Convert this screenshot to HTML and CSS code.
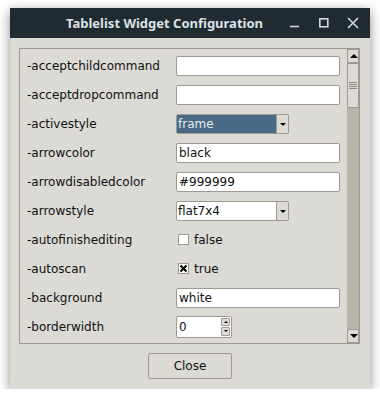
FILE: index.html
```html
<!DOCTYPE html>
<html lang="en">
<head>
	<meta charset="UTF-8">
	<title>Tablelist Widget Configuration</title>
	<link rel="stylesheet" href="styles.css">
</head>
<body>
	<div class="window">
		<div class="titlebar">
			<span class="title">Tablelist Widget Configuration</span>
			<div class="wm-btns">
				<svg width="12" height="12" viewBox="0 0 12 12"><path d="M1 9.5h9" stroke="#d3d7d9" stroke-width="1.6"/></svg>
				<svg width="12" height="12" viewBox="0 0 12 12"><rect x="1.8" y="1.8" width="8" height="8" fill="none" stroke="#d3d7d9" stroke-width="1.6"/></svg>
				<svg width="12" height="12" viewBox="0 0 12 12"><path d="M1 1l10 10M11 1L1 11" stroke="#d3d7d9" stroke-width="1.6"/></svg>
			</div>
		</div>
		<div class="body">
			<div class="frame">
				<div class="list">
					<div class="row"><span class="lbl">-acceptchildcommand</span><span class="entry"></span></div>
					<div class="row"><span class="lbl">-acceptdropcommand</span><span class="entry"></span></div>
					<div class="row"><span class="lbl">-activestyle</span><span class="combo"><span class="combo-txt sel">frame</span><span class="combo-btn"></span></span></div>
					<div class="row"><span class="lbl">-arrowcolor</span><span class="entry">black</span></div>
					<div class="row"><span class="lbl">-arrowdisabledcolor</span><span class="entry">#999999</span></div>
					<div class="row"><span class="lbl">-arrowstyle</span><span class="combo"><span class="combo-txt">flat7x4</span><span class="combo-btn"></span></span></div>
					<div class="row"><span class="lbl">-autofinishediting</span><span class="check"><span class="box"></span>false</span></div>
					<div class="row"><span class="lbl">-autoscan</span><span class="check"><span class="box on"><svg width="9" height="9" viewBox="0 0 9 9"><path d="M1.5 1.5l6 6M7.5 1.5l-6 6" stroke="#000" stroke-width="2"/></svg></span>true</span></div>
					<div class="row"><span class="lbl">-background</span><span class="entry">white</span></div>
					<div class="row"><span class="lbl">-borderwidth</span><span class="spin"><span class="spin-txt">0</span><span class="spin-btns"><span class="sb up"></span><span class="sb down"></span></span></span></div>
				</div>
				<div class="scrollbar">
					<span class="arrow a-up"></span>
					<span class="thumb"><span class="grip"></span></span>
					<span class="trough"></span>
					<span class="arrow a-down"></span>
				</div>
			</div>
			<div class="footer">
				<span class="button">Close</span>
			</div>
		</div>
	</div>
</body>
</html>
```

FILE: styles.css
```css
body{margin:0;background-color:#fff;font-family:"DejaVu Sans",sans-serif;font-size:12px;color:#111;}
.window{width:360px;height:381px;margin:8px 0 0 10px;background-color:#dcdad5;box-shadow:0 3px 11px rgba(0,0,0,.45);display:flex;flex-direction:column;}
.titlebar{height:30px;background-color:#1f2b31;display:flex;align-items:center;flex-shrink:0;}
.title{font-family:"Noto Sans",sans-serif;font-weight:bold;font-size:13px;color:#dde2e6;padding-left:56px;flex:1;}
.wm-btns{display:flex;gap:17px;padding-right:11px;align-items:center;}
.wm-btns svg{display:block;}
.body{flex:1;display:flex;flex-direction:column;padding:10px 10px 0 9px;}
.frame{height:294px;border:1px solid #9e9a91;display:flex;}
.list{flex:1;padding:2px 0 0 7px;overflow:hidden;}
.row{height:29px;display:flex;align-items:center;}
.lbl{width:149px;flex-shrink:0;}
.entry{width:162px;height:18px;background-color:#fff;border:1px solid #9e9a91;border-radius:2px;line-height:18px;text-indent:2px;}
.combo{width:111px;height:18px;border:1px solid #9e9a91;border-radius:2px;background-color:#fff;display:flex;}
.combo-txt{flex:1;line-height:18px;padding-left:1px;}
.combo-txt.sel{background-color:#4a6984;color:#e6ebf0;}
.combo-btn{width:11px;border-left:1px solid #9e9a91;background-color:#dcdad5;position:relative;}
.combo-btn:after{content:"";position:absolute;left:3px;top:8px;border-left:3px solid transparent;border-right:3px solid transparent;border-top:3px solid #000;}
.check{display:flex;align-items:center;padding-left:2px;}
.box{width:9px;height:9px;border:1px solid #9e9a91;background-color:#fff;margin-right:5px;display:flex;align-items:center;justify-content:center;}
.box svg{display:block;}
.spin{width:54px;height:20px;border:1px solid #9e9a91;border-radius:2px;background-color:#fff;display:flex;}
.spin-txt{flex:1;line-height:20px;padding-left:2px;}
.spin-btns{width:9px;display:flex;flex-direction:column;gap:1px;padding:1px 1px 1px 0;}
.sb{flex:1;border:1px solid #9e9a91;border-radius:1px;background-color:#dcdad5;position:relative;}
.sb:after{content:"";position:absolute;left:2px;top:2px;border-left:2px solid transparent;border-right:2px solid transparent;}
.sb.up:after{border-bottom:2px solid #000;}
.sb.down:after{border-top:2px solid #000;}
.scrollbar{width:12px;display:flex;flex-direction:column;background-color:#bab5ab;}
.arrow{height:12px;border:1px solid #9e9a91;background-color:#dcdad5;position:relative;flex-shrink:0;}
.arrow:after{content:"";position:absolute;left:2px;top:4px;border-left:4px solid transparent;border-right:4px solid transparent;}
.a-up:after{border-bottom:4px solid #000;}
.a-down:after{border-top:4px solid #000;}
.thumb{height:43px;border:1px solid #9e9a91;background-color:#dcdad5;display:flex;align-items:center;justify-content:center;flex-shrink:0;}
.grip{width:8px;height:7px;background:repeating-linear-gradient(to bottom,#8d8a82 0,#8d8a82 1px,transparent 1px,transparent 2px);}
.trough{flex:1;}
.footer{display:flex;justify-content:center;padding-top:9px;padding-left:1px;}
.button{width:82px;height:24px;border:1px solid #9e9a91;border-radius:2px;text-align:center;line-height:24px;font-size:12px;}
```
